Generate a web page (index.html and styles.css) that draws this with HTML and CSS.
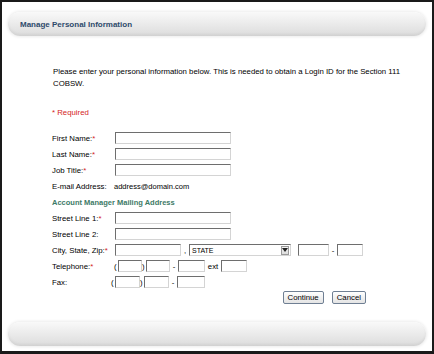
FILE: index.html
```html
<!DOCTYPE html>
<html>
<head>
<meta charset="utf-8">
<link rel="stylesheet" href="styles.css">
</head>
<body>
<div class="frame">
  <div class="bar top-bar"><span class="bar-title">Manage Personal Information</span></div>
  <div class="content">
    <p class="intro">Please enter your personal information below. This is needed to obtain a Login ID for the Section 111 COBSW.</p>
    <p class="req"><span class="star">*</span> Required</p>
    <div class="form">
      <div class="row"><span class="label">First Name:<span class="star">*</span></span><span class="input w116"></span></div>
      <div class="row"><span class="label">Last Name:<span class="star">*</span></span><span class="input w116"></span></div>
      <div class="row"><span class="label">Job Title:<span class="star">*</span></span><span class="input w116"></span></div>
      <div class="row"><span class="label">E-mail Address:</span><span class="value">address@domain.com</span></div>
      <div class="row heading">Account Manager Mailing Address</div>
      <div class="row"><span class="label">Street Line 1:<span class="star">*</span></span><span class="input w116"></span></div>
      <div class="row"><span class="label">Street Line 2:</span><span class="input w116"></span></div>
      <div class="row"><span class="label">City, State, Zip:<span class="star">*</span></span>
        <span class="input w66"></span><span class="sep comma">,</span>
        <span class="select"><span class="select-text">STATE</span><span class="arrow"><svg width="6" height="4" viewBox="0 0 6 4"><path d="M0 0H6L3 4Z" fill="#222"/></svg></span></span>
        <span class="input w31 zip"></span><span class="sep">-</span><span class="input w26"></span>
      </div>
      <div class="row"><span class="label">Telephone:<span class="star">*</span></span>
        <span class="phone tel">
          <span class="paren">(</span><span class="input w23"></span><span class="paren">)</span><span class="input w23"></span><span class="sep">-</span><span class="input w27"></span><span class="ext">ext</span><span class="input w26"></span>
        </span>
      </div>
      <div class="row"><span class="label">Fax:</span>
        <span class="phone fax">
          <span class="paren">(</span><span class="input w24"></span><span class="paren">)</span><span class="input w24"></span><span class="sep">-</span><span class="input w28"></span>
        </span>
      </div>
      <div class="actions">
        <button class="btn">Continue</button>
        <button class="btn">Cancel</button>
      </div>
    </div>
  </div>
  <div class="bar bottom-bar"></div>
</div>
</body>
</html>
```
FILE: styles.css
```css
* { box-sizing: border-box; }
html, body { margin: 0; padding: 0; background: #fff; }
body {
  font-family: "Liberation Sans", Arial, sans-serif;
  font-size: 7.8px;
  color: #000;
}
.frame {
  width: 434px;
  height: 354px;
  border: 2px solid #1a1a1a;
  border-bottom-width: 3px;
  padding: 10px 6px 0 6px;
  display: flex;
  flex-direction: column;
}
.bar {
  height: 24px;
  border-radius: 12px;
  background: linear-gradient(#f9f9f9 0%, #ececec 45%, #dcdcdc 100%);
  box-shadow: 0 0 3px 1px rgba(0,0,0,0.08), inset 0 -2px 3px rgba(0,0,0,0.05);
  flex: none;
}
.top-bar {
  display: flex;
  align-items: center;
  padding-left: 12px;
}
.bar-title {
  font-weight: bold;
  font-size: 8px;
  color: #2e4a6b;
}
.content {
  flex: 1;
  padding-left: 44px;
}
.intro {
  margin: 30px 0 0 1px;
  width: 350px;
  line-height: 12px;
}
.req {
  margin: 17px 0 0 0;
  line-height: 12px;
  color: #d42424;
}
.star { color: #d42424; }
.form { margin-top: 11px; }
.row {
  display: flex;
  align-items: center;
  height: 16px;
}
.label {
  width: 63px;
  flex: none;
}
.value { margin-left: -1px; font-size: 7.5px; }
.heading {
  font-weight: bold;
  color: #3d7a66;
  font-size: 7.5px;
}
.input {
  display: inline-block;
  height: 12px;
  background: #fff;
  border: 1px solid;
  border-color: #6e6e6e #d4d4d4 #d4d4d4 #6e6e6e;
  flex: none;
}
.w116 { width: 116px; }
.w66 { width: 66px; }
.w31 { width: 31px; }
.w26 { width: 26px; }
.w23 { width: 24px; }
.w24 { width: 25px; }
.w27 { width: 27px; }
.w28 { width: 28px; }
.sep { width: 8px; text-align: center; flex: none; }
.comma { width: 8px; }
.zip { margin-left: 7px; }
.select {
  display: flex;
  align-items: center;
  justify-content: space-between;
  width: 102px;
  height: 12px;
  border: 1px solid;
  border-color: #6e6e6e #d4d4d4 #d4d4d4 #6e6e6e;
  padding: 0 1px 0 2px;
  font-size: 7px;
}
.arrow {
  width: 8px;
  height: 9px;
  border: 1px solid #9a9a9a;
  background: linear-gradient(#f4f4f4, #dcdcdc);
  display: flex;
  align-items: center;
  justify-content: center;
}
.phone { display: flex; align-items: center; }
.tel { margin-left: -1px; }
.fax { margin-left: -4px; }
.paren { width: 4px; text-align: left; flex: none; }
.ext { width: 16px; text-align: center; flex: none; }
.actions {
  display: flex;
  justify-content: flex-end;
  gap: 8px;
  width: 314px;
  height: 15px;
  align-items: center;
}
.btn {
  font-family: "Liberation Sans", Arial, sans-serif;
  font-size: 7.8px;
  color: #000;
  height: 13px;
  padding: 0 4px;
  border: 1px solid #6f7f93;
  border-radius: 2px;
  background: linear-gradient(#ffffff, #e4e4e4);
  line-height: 11px;
}
.bottom-bar {
  margin-top: auto;
  margin-bottom: 5px;
}
```
